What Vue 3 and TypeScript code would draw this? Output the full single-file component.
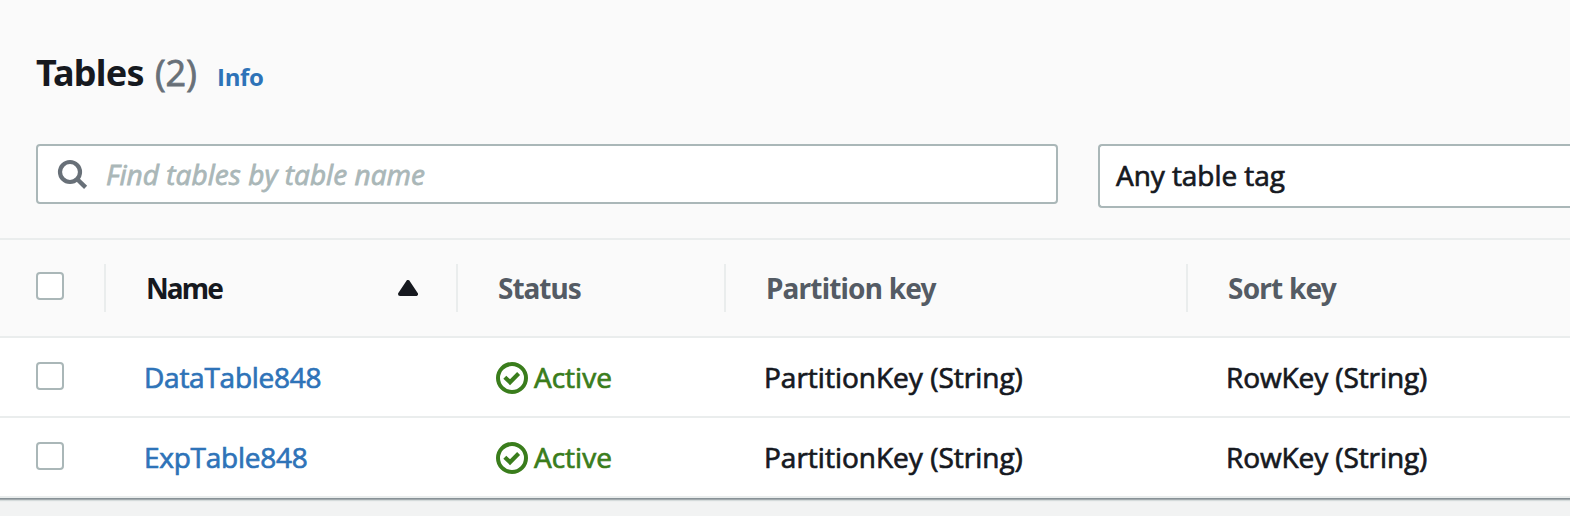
<script setup lang="ts">
interface TableRow {
  name: string
  status: string
  partitionKey: string
  sortKey: string
}

const rows: TableRow[] = [
  { name: 'DataTable848', status: 'Active', partitionKey: 'PartitionKey (String)', sortKey: 'RowKey (String)' },
  { name: 'ExpTable848', status: 'Active', partitionKey: 'PartitionKey (String)', sortKey: 'RowKey (String)' },
]
</script>

<template>
  <main class="page">
    <section class="panel">
      <header class="top">
        <div class="heading">
          <h1>Tables</h1>
          <span class="count">(2)</span>
          <a class="info">Info</a>
        </div>
        <div class="filters">
          <div class="search">
            <svg class="search-icon" viewBox="0 0 32 32" width="32" height="32">
              <circle cx="14" cy="14" r="10" fill="none" stroke="#687078" stroke-width="4.2" />
              <path d="M21 21 L29.6 29.4" fill="none" stroke="#687078" stroke-width="4.4" />
            </svg>
            <span class="placeholder">Find tables by table name</span>
          </div>
          <div class="select">Any table tag</div>
        </div>
      </header>

      <div class="grid head">
        <div class="cell check"><span class="box"></span></div>
        <div class="cell sorted">
          <span>Name</span>
          <svg class="sort" viewBox="0 0 20 16" width="20" height="16">
            <path d="M10 2 L18 14 H2 Z" fill="#16191f" stroke="#16191f" stroke-width="4" stroke-linejoin="round" />
          </svg>
        </div>
        <div class="cell">Status</div>
        <div class="cell partition">Partition key</div>
        <div class="cell partition">Sort key</div>
      </div>

      <div v-for="row in rows" :key="row.name" class="grid body">
        <div class="cell check"><span class="box"></span></div>
        <div class="cell"><a class="link">{{ row.name }}</a></div>
        <div class="cell active">
          <svg viewBox="0 0 32 32" width="32" height="32">
            <circle cx="16" cy="16" r="14" fill="none" stroke="#3a7d1c" stroke-width="4" />
            <path d="M8.8 15.2 L14 20.2 L22.6 11.6" fill="none" stroke="#3a7d1c" stroke-width="4.2" />
          </svg>
          <span>{{ row.status }}</span>
        </div>
        <div class="cell">{{ row.partitionKey }}</div>
        <div class="cell row-key">{{ row.sortKey }}</div>
      </div>
    </section>
  </main>
</template>

<style>
body {
  margin: 0;
  overflow: hidden;
}
</style>

<style scoped>
.page {
  height: 516px;
  background: #f2f3f3;
  color: #16191f;
  font: 400 28px/40px "Open Sans", "Noto Sans", sans-serif;
  white-space: nowrap;
  overflow: hidden;
}

.panel {
  background: #fff;
  box-shadow: 0 1px 0 #879196, 0 2px 0 #a2a9ad, 0 3px 1px #d5dbdb;
}

.top {
  box-sizing: border-box;
  height: 240px;
  padding: 47px 0 0 36px;
  background: #fafafa;
  border-bottom: 2px solid #eaeded;
}

.heading {
  display: flex;
  align-items: baseline;
  height: 52px;
  line-height: 52px;
}

h1 {
  margin: 0;
  width: 119px;
  font: 700 36px/52px "Noto Sans", sans-serif;
  letter-spacing: -0.8px;
}

.count {
  width: 62px;
  color: #687078;
  font-size: 36px;
  -webkit-text-stroke: 0.8px;
}

.info {
  color: #2e73b8;
  font-size: 24px;
  font-weight: 700;
  letter-spacing: -0.3px;
}

.filters {
  display: flex;
  align-items: flex-start;
  gap: 40px;
  margin-top: 45px;
}

.search,
.select {
  box-sizing: border-box;
  border: 2px solid #aab7b8;
  border-radius: 4px;
  background: #fff;
}

.search {
  display: flex;
  align-items: center;
  width: 1022px;
  height: 60px;
  padding-left: 18px;
}

.search-icon {
  margin-right: 18px;
}

.placeholder {
  color: #aab7b8;
  font-style: italic;
  letter-spacing: 0.05px;
  -webkit-text-stroke: 0.8px;
}

.select {
  flex: 1;
  height: 64px;
  padding-left: 16px;
  border-right: 0;
  border-radius: 4px 0 0 4px;
  line-height: 58px;
  letter-spacing: -0.06px;
  -webkit-text-stroke: 0.7px;
}

.grid {
  display: grid;
  grid-template-columns: 104px 352px 268px 462px 1fr;
  box-sizing: border-box;
  border-bottom: 2px solid #eaeded;
}

.head {
  height: 98px;
  padding: 24px 0;
  background: #fafafa;
  color: #545b64;
  font: 700 28px/48px "Noto Sans", sans-serif;
  letter-spacing: -1px;
}

.head .cell {
  height: 48px;
  padding-left: 40px;
  border-left: 2px solid #eaeded;
  box-sizing: border-box;
}

.head .partition {
  letter-spacing: -0.8px;
}

.head .check {
  padding: 8px 0 0 36px;
  border: 0;
}

.head .sorted {
  display: flex;
  align-items: center;
  justify-content: space-between;
  padding-right: 38px;
  color: #16191f;
  letter-spacing: -1.9px;
}

.body {
  height: 80px;
  line-height: 78px;
  -webkit-text-stroke: 0.7px;
}

.body .cell {
  padding-left: 40px;
}

.body .check {
  padding: 24px 0 0 36px;
}

.box {
  display: block;
  box-sizing: border-box;
  width: 28px;
  height: 28px;
  border: 2px solid #aab7b8;
  border-radius: 4px;
  background: #fff;
}

.link {
  color: #2e73b8;
  letter-spacing: -0.25px;
}

.body .active {
  display: flex;
  align-items: center;
  gap: 6px;
  color: #3a7d1c;
}

.active svg {
  margin-top: 2px;
}

.active circle,
.active path {
  -webkit-text-stroke: 0;
}

.row-key {
  letter-spacing: -0.1px;
}
</style>
